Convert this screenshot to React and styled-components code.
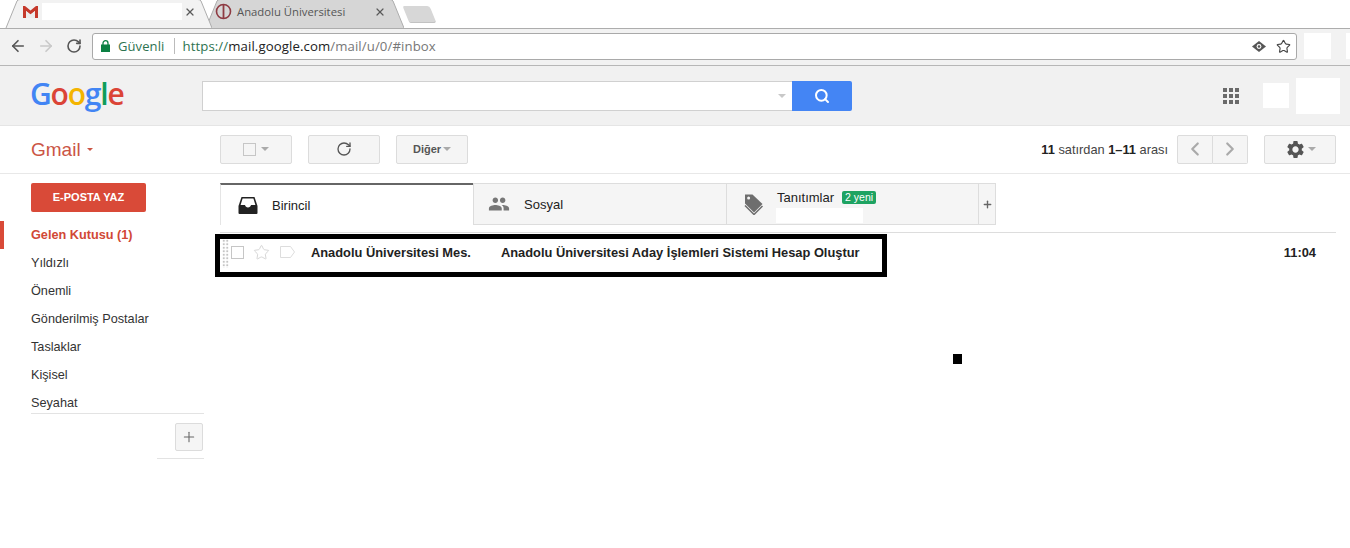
import React from "react";
import styled, { createGlobalStyle } from "styled-components";
import { ArrowLeft, ArrowRight, RotateCw, Star, Plus, ChevronLeft, ChevronRight, X, Search } from "lucide-react";
import { MdPeople, MdSettings } from "react-icons/md";

const Global = createGlobalStyle`
  html, body { margin: 0; padding: 0; background: #fff; }
  body { font-family: "Liberation Sans", Arial, sans-serif; color: #222; width: 1350px; height: 548px; overflow: hidden; }
  * { box-sizing: border-box; }
`;

const Page = styled.div`position: relative; width: 1350px; height: 548px; overflow: hidden;`;

const TabStrip = styled.div`display: flex; height: 29px; padding-left: 5px; background: #fff; border-bottom: 1px solid #adadad; align-items: flex-end;`;
const Tab = styled.div`
  position: relative; height: 29px; width: ${p => p.$w}px; margin-left: ${p => p.$ml || 0}px;
  z-index: ${p => (p.$active ? 2 : 1)}; display: flex; align-items: center; padding: 0 0 4px ${p => p.$pad}px;
  font-family: "Open Sans", sans-serif; font-size: 11.3px; color: #555;
`;
const TabShape = styled.svg`position: absolute; inset: 0; width: 100%; height: 100%;`;
const TabContent = styled.div`position: relative; display: flex; align-items: center; flex: 1;`;
const Redact = styled.div`
  background: #fff; width: ${p => p.$w}px; height: ${p => p.$h}px; flex: none; margin-left: 4px;
`;
const TabTitle = styled.span`margin-left: 5px; width: 132px; white-space: nowrap;`;
const TabClose = styled.span`display: flex; color: #5a5a5a; margin-left: ${p => p.$ml}px;`;
const NewTab = styled.div`
  width: 33px; height: 17px; margin: 0 0 5px -1px; background: #d7d7d7; border-radius: 2px 3px 3px 2px;
  transform: skewX(22deg) scaleX(.82); border-bottom: 1px solid #c2c2c2;
`;

const Toolbar = styled.div`display: flex; align-items: center; height: 37px; background: #f2f2f2; border-bottom: 1px solid #b7b7b7; padding: 0 0 2px 9px;`;
const NavBtn = styled.span`display: flex; color: ${p => p.$c}; margin-right: ${p => p.$mr}px;`;
const AddressBar = styled.div`
  display: flex; align-items: center; width: 1205px; flex: none; height: 27px; background: #fff; border: 1px solid #a9a9a9; border-radius: 3px;
  padding: 0 5px 0 8px; font-family: "Open Sans", sans-serif; font-size: 13.2px; letter-spacing: .1px;
`;
const Secure = styled.span`color: #2d7350; margin-left: 8px; font-size: 13px;`;
const Divider = styled.span`width: 1px; height: 16px; background: #bbb; margin: 0 7px 0 10px;`;
const UrlPart = styled.span`color: ${p => p.$c};`;
const AddrIcons = styled.div`margin-left: auto; display: flex; align-items: center; gap: 10px; color: #444;`;
const BlankBox = styled.div`background: #fff; flex: none; width: ${p => p.$w}px; height: ${p => p.$h}px; margin-left: ${p => p.$ml}px;`;

const Header = styled.div`display: flex; align-items: center; height: 60px; background: #f1f1f1; border-bottom: 1px solid #e5e5e5; padding-left: 30px;`;
const Logo = styled.div`
  width: 172px; flex: none; font-family: "Open Sans", sans-serif; font-size: 30px; line-height: 1; letter-spacing: -1.2px; margin-top: -3px; font-weight: 600;
`;
const L = styled.span`color: ${p => p.$c};`;
const SearchBox = styled.div`display: flex; width: 650px; height: 30px; margin-top: 1px;`;
const SearchInput = styled.div`flex: 1; background: #fff; border: 1px solid #d0d0d0; border-right: 0; display: flex; align-items: center; justify-content: flex-end; padding-right: 6px;`;
const Caret = styled.span`
  display: inline-block; width: 0; height: 0; border-left: ${p => p.$s || 4}px solid transparent; border-right: ${p => p.$s || 4}px solid transparent;
  border-top: ${p => p.$s || 4}px solid ${p => p.$c}; margin-left: ${p => p.$ml || 0}px;
`;
const SearchBtn = styled.div`width: 60px; background: #4485f4; border-radius: 0 2px 2px 0; display: flex; align-items: center; justify-content: center; color: #fff;`;
const Apps = styled.div`
  display: grid; grid-template-columns: repeat(3, 4px); grid-auto-rows: 4px; gap: 2px; margin-left: 371px; flex: none;
`;
const Dot = styled.i`background: #6a6a6a; display: block;`;

const ActionBar = styled.div`display: flex; align-items: center; height: 48px; border-bottom: 1px solid #e8e8e8; padding-left: 31px; padding-bottom: 1px;`;
const Gmail = styled.div`width: 189px; flex: none; color: #cb5545; font-size: 19px; display: flex; align-items: center; padding-top: 1px;`;
const Btn = styled.div`
  display: flex; align-items: center; justify-content: center; width: ${p => p.$w}px; height: 29px; margin-right: ${p => p.$mr || 0}px; flex: none;
  background: #f5f5f5; border: 1px solid #dcdcdc; border-radius: 2px; color: #555; font-size: 11px; font-weight: bold;
`;
const CheckBox = styled.span`display: block; width: 13px; height: 13px; background: ${p => p.$bg || "transparent"}; border: 1px solid #c6c6c6;`;
const Pager = styled.div`margin-left: auto; font-size: 12.8px; color: #444; margin-right: 9px;`;
const Bold = styled.b`color: #222;`;
const BtnGroup = styled.div`display: flex; margin-right: 16px;`;
const PagerBtn = styled(Btn)`
  border-radius: ${p => (p.$left ? "2px 0 0 2px" : "0 2px 2px 0")}; ${p => (p.$left ? "" : "border-left: 0;")} color: #aaa;
`;

const Body = styled.div`display: flex; position: relative;`;
const Sidebar = styled.div`width: 220px; flex: none; padding-top: 9px;`;
const Compose = styled.div`
  margin-left: 31px; width: 115px; height: 29px; background: #d94a38; border-radius: 2px; color: #fff; font-size: 11px; font-weight: bold;
  display: flex; align-items: center; justify-content: center; padding-bottom: 2px;
`;
const NavList = styled.div`margin-top: 9px;`;
const NavItem = styled.div`
  height: 28px; display: flex; align-items: center; padding-left: ${p => (p.$active ? 27 : 31)}px; font-size: 12.7px; color: ${p => (p.$active ? "#d14836" : "#333")};
  font-weight: ${p => (p.$active ? "bold" : "normal")}; position: relative; border-left: ${p => (p.$active ? "4px solid #d94a38" : "0")}; 
`;
const SideRule = styled.div`height: 1px; background: #e3e3e3; margin: ${p => p.$mt || 0}px 16px 0 ${p => p.$ml}px;`;
const AddRow = styled.div`display: flex; justify-content: flex-end; padding: 9px 17px 0 0;`;
const AddBtn = styled.div`width: 28px; height: 28px; background: #f5f5f5; border: 1px solid #dcdcdc; border-radius: 2px; color: #666; display: flex; align-items: center; justify-content: center;`;

const Main = styled.div`flex: 1; margin-right: 14px; padding-top: 9px;`;
const Tabs = styled.div`display: flex; height: 42px;`;
const MailTab = styled.div`
  display: flex; align-items: center; position: relative; width: ${p => p.$w}px; flex: none; padding-left: ${p => p.$pl || 17}px; font-size: 13px; color: #222;
  ${p => p.$active
    ? "background:#fff; border-top: 2px solid #666; border-left: 1px solid #e5e5e5;"
    : "background:#f5f5f5; border-top: 1px solid #ddd; border-bottom: 1px solid #ddd; border-left: 1px solid #ddd;"}
`;
const TabLabel = styled.span`margin-left: ${p => p.$ml}px;`;
const PromoWrap = styled.div`margin-left: 13px; display: flex; flex-direction: column; margin-top: 4px;`;
const PromoTop = styled.div`display: flex; align-items: center;`;
const Badge = styled.span`background: #1ea362; color: #fff; font-size: 10.5px; padding: 1px 3px; border-radius: 2px; margin-left: 8px; line-height: 11px;`;
const PromoBlank = styled.div`width: 87px; height: 15px; background: #fff; margin: 3px 0 0 -1px;`;
const PlusTab = styled.div`
  width: 18px; display: flex; align-items: center; justify-content: center; background: #f5f5f5; color: #666; border: 1px solid #ddd; border-left: 1px solid #ddd;
`;
const Rule = styled.div`height: 1px; background: #ddd; margin-top: 7px;`;
const MailRow = styled.div`
  position: relative; display: flex; align-items: center; height: 38px; font-size: 12.85px; font-weight: bold; color: #222; 
`;
const Grip = styled.div`
  width: 7px; height: 29px; margin: 2px 0 0 2px; background-image: radial-gradient(#c4c4c4 1.2px, transparent 1.4px); background-size: 3.500px 3.500px; flex: none;
`;
const RowCheck = styled(CheckBox)`margin-left: 2px; flex: none;`;
const RowStar = styled.span`display: flex; color: #cfcfcf; margin-left: 9px;`;
const RowTag = styled.span`display: flex; margin-left: 10px;`;
const Sender = styled.span`margin-left: 16px; width: 190px; flex: none;`;
const Subject = styled.span`flex: none; white-space: nowrap;`;
const Time = styled.span`margin-left: auto; margin-right: 20px;`;
const Highlight = styled.div`position: absolute; left: -5px; top: 1px; width: 672px; height: 43px; border: 5px solid #000; pointer-events: none;`;
const Cursor = styled.div`position: absolute; left: 953px; top: 354px; width: 9px; height: 10px; background: #000;`;

const Inbox = () => (
  <svg width="20" height="18" viewBox="0 0 20 18"><path d="M3.5 1h13L19.5 10v7a1 1 0 0 1-1 1h-17a1 1 0 0 1-1-1v-7z" fill="#222"/><path d="M4.6 2.6h10.8l2 6.4h-4.4c-.3 1.6-1.5 2.5-3 2.5s-2.700-.9-3-2.500H2.600z" fill="#fff"/></svg>
);
const TagIcon = () => (
  <svg width="20" height="22" viewBox="0 0 20 22"><path d="M1 1.500h7.500L18.500 11 10 19.500 1 10.500z" fill="#6e6e6e"/><circle cx="4.600" cy="5" r="1.500" fill="#f5f5f5"/><path d="M1 12.500l9 9 8.500-8.500" stroke="#6e6e6e" strokeWidth="1.500" fill="none"/></svg>
);
const Favicon = () => (
  <svg width="15" height="12" viewBox="0 0 15 12"><path d="M0 0v12h3V5l4.500 3.500L12 5v7h3V0h-2L7.500 4.500 2 0z" fill="#c5392b"/><path d="M3 5l4.500 3.500L12 5v7H3z" fill="#ececec"/></svg>
);
const UniIcon = () => (
  <svg width="17" height="17" viewBox="0 0 17 17"><circle cx="8.500" cy="8.500" r="7" fill="none" stroke="#8e3a42" strokeWidth="1.600"/><path d="M8.500 1.500v14" stroke="#8e3a42" strokeWidth="1.800"/></svg>
);
const EyeIcon = () => (
  <svg width="14" height="11" viewBox="0 0 14 11"><path d="M7 0L14 5.500 7 11 0 5.500z" fill="#555"/><circle cx="7" cy="5.500" r="2.400" fill="#fff"/><circle cx="7" cy="5.500" r="1.300" fill="#555"/></svg>
);
const RowLabel = () => (
  <svg width="15" height="12" viewBox="0 0 15 12"><path d="M.5.500h10l4 5.500-4 5.500H.5z" fill="none" stroke="#ddd"/></svg>
);
const LockIcon = () => (
  <svg width="9" height="12" viewBox="0 0 9 12"><path d="M2 5V3.200a2.500 2.500 0 0 1 5 0V5" fill="none" stroke="#0b8043" strokeWidth="1.300"/><rect y="4.500" width="9" height="7.500" fill="#0b8043"/></svg>
);

export default function App() {
  return (
    <Page>
      <Global />
      <TabStrip>
        <Tab $active $w={207} $pad={18}>
          <TabShape viewBox="0 0 207 29" preserveAspectRatio="none">
            <path d="M1 29 L12 2 Q13 .5 15 .5 H193 Q195 .5 196 2 L207 29" fill="#f2f2f2" stroke="#adadad" />
          </TabShape>
          <TabContent>
            <Favicon />
            <Redact $w={140} $h={17} />
            <TabClose $ml={2}><X size={12} strokeWidth={2.4} /></TabClose>
          </TabContent>
        </Tab>
        <Tab $w={199} $ml={-7} $pad={10}>
          <TabShape viewBox="0 0 199 29" preserveAspectRatio="none">
            <path d="M1 29 L12 2 Q13 .5 15 .5 H185 Q187 .5 188 2 L199 29" fill="#d6d6d6" stroke="#adadad" />
          </TabShape>
          <TabContent>
            <UniIcon />
            <TabTitle>Anadolu Üniversitesi</TabTitle>
            <TabClose $ml={5}><X size={12} strokeWidth={2.4} /></TabClose>
          </TabContent>
        </Tab>
        <NewTab />
      </TabStrip>

      <Toolbar>
        <NavBtn $c="#555" $mr={10}><ArrowLeft size={18} strokeWidth={2.2} /></NavBtn>
        <NavBtn $c="#c9c9c9" $mr={11}><ArrowRight size={18} strokeWidth={2.2} /></NavBtn>
        <NavBtn $c="#555" $mr={10}><RotateCw size={16} strokeWidth={2.4} /></NavBtn>
        <AddressBar>
          <LockIcon />
          <Secure>Güvenli</Secure>
          <Divider />
          <UrlPart $c="#2d7350">https://</UrlPart>
          <UrlPart $c="#222">mail.google.com</UrlPart>
          <UrlPart $c="#777">/mail/u/0/#inbox</UrlPart>
          <AddrIcons>
            <EyeIcon />
            <Star size={15} strokeWidth={1.8} />
          </AddrIcons>
        </AddressBar>
        <BlankBox $w={27} $h={26} $ml={7} />
        <BlankBox $w={4} $h={26} $ml={15} />
      </Toolbar>

      <Header>
        <Logo>
          <L $c="#4285f4">G</L><L $c="#db4437">o</L><L $c="#f4b400">o</L><L $c="#4285f4">g</L><L $c="#0f9d58">l</L><L $c="#db4437">e</L>
        </Logo>
        <SearchBox>
          <SearchInput><Caret $c="#c8c8c8" /></SearchInput>
          <SearchBtn><Search size={16} strokeWidth={3} /></SearchBtn>
        </SearchBox>
        <Apps>{Array.from({ length: 9 }, (_, i) => <Dot key={i} />)}</Apps>
        <BlankBox $w={26} $h={25} $ml={24} />
        <BlankBox $w={44} $h={36} $ml={7} />
      </Header>

      <ActionBar>
        <Gmail>Gmail<Caret $c="#cb5545" $s={3.500} $ml={6} /></Gmail>
        <Btn $w={72} $mr={16}><CheckBox /><Caret $c="#aaa" $ml={5} /></Btn>
        <Btn $w={72} $mr={16}><RotateCw size={16} strokeWidth={2} /></Btn>
        <Btn $w={72}>Diğer<Caret $c="#aaa" $ml={2} /></Btn>
        <Pager><Bold>11</Bold> satırdan <Bold>1–11</Bold> arası</Pager>
        <BtnGroup>
          <PagerBtn $w={36} $left><ChevronLeft size={22} strokeWidth={2.4} /></PagerBtn>
          <PagerBtn $w={35}><ChevronRight size={22} strokeWidth={2.4} /></PagerBtn>
        </BtnGroup>
        <Btn $w={72} $mr={14}><MdSettings size={21} /><Caret $c="#aaa" $ml={2} /></Btn>
      </ActionBar>

      <Body>
        <Sidebar>
          <Compose>E-POSTA YAZ</Compose>
          <NavList>
            <NavItem $active>Gelen Kutusu (1)</NavItem>
            <NavItem>Yıldızlı</NavItem>
            <NavItem>Önemli</NavItem>
            <NavItem>Gönderilmiş Postalar</NavItem>
            <NavItem>Taslaklar</NavItem>
            <NavItem>Kişisel</NavItem>
            <NavItem>Seyahat</NavItem>
          </NavList>
          <SideRule $ml={31} $mt={-4} />
          <AddRow><AddBtn><Plus size={16} strokeWidth={1.6} /></AddBtn></AddRow>
          <SideRule $ml={157} $mt={7} />
        </Sidebar>
        <Main>
          <Tabs>
            <MailTab $active $w={253}><Inbox /><TabLabel $ml={14}>Birincil</TabLabel></MailTab>
            <MailTab $w={253} $pl={14}><MdPeople size={22} color="#777" /><TabLabel $ml={14}>Sosyal</TabLabel></MailTab>
            <MailTab $w={252}>
              <TagIcon />
              <PromoWrap>
                <PromoTop>Tanıtımlar<Badge>2 yeni</Badge></PromoTop>
                <PromoBlank />
              </PromoWrap>
            </MailTab>
            <PlusTab><Plus size={11} strokeWidth={3} /></PlusTab>
          </Tabs>
          <Rule />
          <MailRow>
            <Grip />
            <RowCheck />
            <RowStar><Star size={17} strokeWidth={1.2} /></RowStar>
            <RowTag><RowLabel /></RowTag>
            <Sender>Anadolu Üniversitesi Mes.</Sender>
            <Subject>Anadolu Üniversitesi Aday İşlemleri Sistemi Hesap Oluştur</Subject>
            <Time>11:04</Time>
            <Highlight />
          </MailRow>
        </Main>
      </Body>
      <Cursor />
    </Page>
  );
}
